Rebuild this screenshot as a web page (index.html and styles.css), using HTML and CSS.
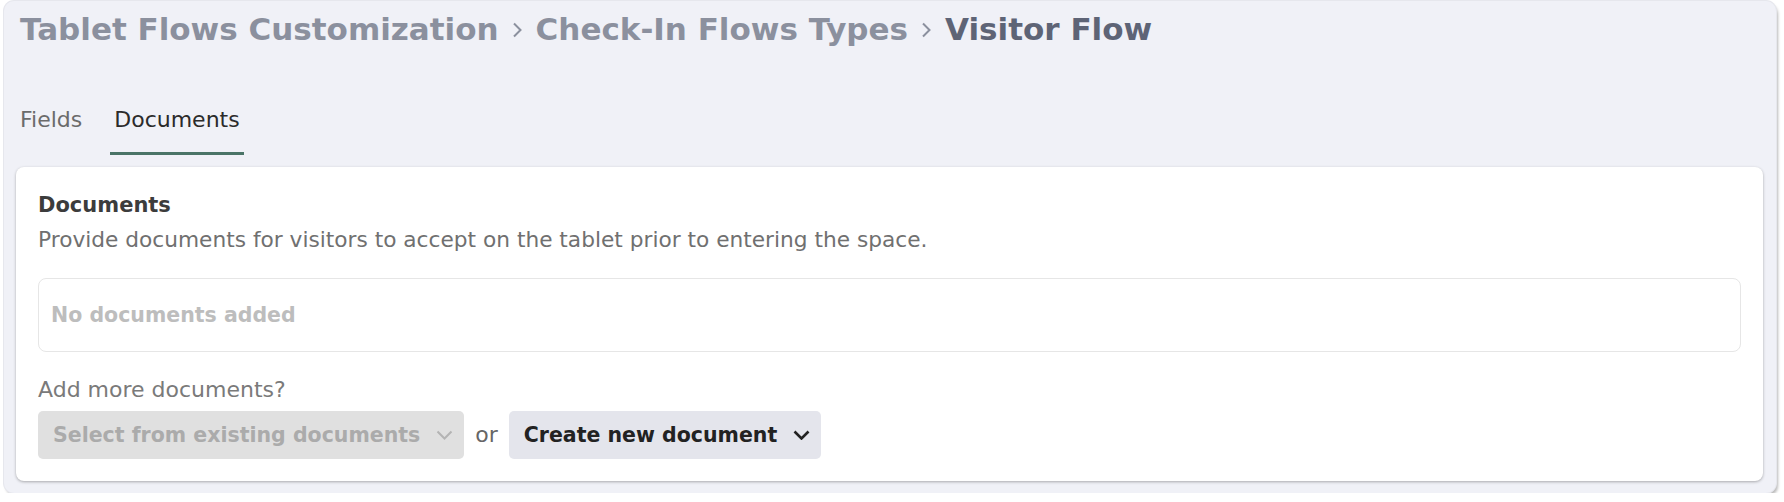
FILE: index.html
```html
<!DOCTYPE html>
<html lang="en">
<head>
    <meta charset="UTF-8">
    <meta name="viewport" content="width=device-width, initial-scale=1.0">
    <title>Visitor Flow</title>
    <link rel="stylesheet" href="styles.css">
</head>
<body>

    <div class="panel">
        <div class="breadcrumb">
            <span class="crumb">Tablet Flows Customization</span>
            <svg class="crumb-sep" width="12" height="16" viewBox="0 0 12 16"><polyline points="3,1.5 9.5,8 3,14.5" fill="none" stroke="#8b909e" stroke-width="2"/></svg>
            <span class="crumb">Check-In Flows Types</span>
            <svg class="crumb-sep" width="12" height="16" viewBox="0 0 12 16"><polyline points="3,1.5 9.5,8 3,14.5" fill="none" stroke="#8b909e" stroke-width="2"/></svg>
            <span class="crumb crumb-current">Visitor Flow</span>
        </div>

        <div class="tabs">
            <div class="tab">Fields</div>
            <div class="tab tab-active">Documents</div>
        </div>

        <div class="card">
            <div class="card-title">Documents</div>
            <div class="card-description">Provide documents for visitors to accept on the tablet prior to entering the space.</div>

            <div class="empty-box">No documents added</div>

            <div class="add-label">Add more documents?</div>
            <div class="actions">
                <div class="action-button disabled">
                    <span>Select from existing documents</span>
                    <svg width="17" height="10" viewBox="0 0 17 10"><polyline points="1.5,1.5 8.5,8.5 15.5,1.5" fill="none" stroke="#b4b4b4" stroke-width="2"/></svg>
                </div>
                <span class="or">or</span>
                <div class="action-button">
                    <span>Create new document</span>
                    <svg width="17" height="10" viewBox="0 0 17 10"><polyline points="1.5,1.5 8.5,8.5 15.5,1.5" fill="none" stroke="#222222" stroke-width="2.6"/></svg>
                </div>
            </div>
        </div>
    </div>

</body>
</html>
```

FILE: styles.css
```css
body {
    margin: 0;
    background-color: #ffffff;
    font-family: "DejaVu Sans", "Liberation Sans", sans-serif;
}
.panel {
    margin: 1px 8px 0 4px;
    padding: 9px 13px 12px 12px;
    background-color: #f0f1f7;
    border-radius: 10px;
    box-shadow: 0 0 0 1px #e6e7ed, 2px 3px 3px rgba(0, 0, 0, 0.28);
}
.breadcrumb {
    display: flex;
    align-items: center;
    margin-left: 4px;
    font-size: 31px;
    font-weight: bold;
    line-height: 38px;
    color: #8b909e;
}
.crumb-sep {
    margin: 0 13px 0 12px;
    transform: translateY(1px);
}
.crumb-current {
    color: #5e6476;
}
.tabs {
    display: flex;
    gap: 24px;
    margin-top: 59px;
}
.tab {
    font-size: 22px;
    line-height: 26px;
    padding: 0 4px 19px 4px;
    border-bottom: 3px solid transparent;
    color: #6b6b6b;
}
.tab-active {
    color: #2b2b2b;
    border-bottom-color: #4a7467;
}
.card {
    margin-top: 12px;
    padding: 25px 22px 22px 22px;
    background-color: #ffffff;
    border-radius: 8px;
    box-shadow: 0 1px 3px rgba(0, 0, 0, 0.3);
}
.card-title {
    font-size: 21px;
    font-weight: bold;
    line-height: 26px;
    color: #3c3c3c;
}
.card-description {
    margin-top: 8px;
    font-size: 21.7px;
    line-height: 28px;
    color: #707070;
}
.empty-box {
    margin-top: 24px;
    height: 72px;
    display: flex;
    align-items: center;
    padding: 0 12px;
    border: 1px solid #e6e6e6;
    border-radius: 8px;
    font-size: 20.5px;
    font-weight: bold;
    line-height: 24px;
    color: #bdbdbd;
}
.add-label {
    margin-top: 25px;
    font-size: 22px;
    line-height: 26px;
    color: #7a7a7a;
}
.actions {
    display: flex;
    align-items: center;
    margin-top: 8px;
}
.action-button {
    display: flex;
    align-items: center;
    gap: 16px;
    height: 48px;
    padding: 0 11px 0 15px;
    border-radius: 5px;
    background-color: #e4e5ec;
    font-size: 20.5px;
    font-weight: bold;
    line-height: 24px;
    color: #222222;
    cursor: pointer;
}
.action-button.disabled {
    background-color: #e0e0e0;
    color: #ababab;
    cursor: default;
}
.or {
    margin: 0 11px;
    font-size: 22px;
    line-height: 26px;
    color: #666666;
}
```
